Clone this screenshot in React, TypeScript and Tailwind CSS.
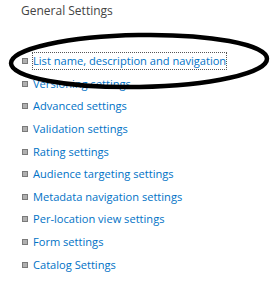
import React from 'react';

const items = [
  'List name, description and navigation',
  'Versioning settings',
  'Advanced settings',
  'Validation settings',
  'Rating settings',
  'Audience targeting settings',
  'Metadata navigation settings',
  'Per-location view settings',
  'Form settings',
  'Catalog Settings',
];

const App: React.FC = () => {
  return (
    <div className="relative w-[270px] h-[282px] bg-white overflow-hidden" style={{ fontFamily: '"Open Sans", "Noto Sans", sans-serif' }}>
      <h3 className="pl-[21px] pt-[2px] text-[12px] font-normal text-[#444444] leading-[18px]">General Settings</h3>
      <ul className="mt-[30px] pl-[22px]">
        {items.map((item, i) => (
          <li key={item} className="flex items-center h-[22.6px]">
            <span className="w-[6px] h-[6px] bg-[#b0b0b0] border border-[#7a7a7a] mr-[5px] shrink-0" />
            <a
              href="#"
              className={`text-[11.1px] leading-[16px] text-[#0072c6] whitespace-nowrap ${
                i === 0 ? 'outline outline-1 outline-dotted outline-[#555]' : ''
              }`}
            >
              {item}
            </a>
          </li>
        ))}
      </ul>
      {/* hand-drawn annotation */}
      <svg className="absolute left-0 top-0 pointer-events-none" width="270" height="282">
        <ellipse cx="139" cy="61" rx="128" ry="26" fill="none" stroke="#000" strokeWidth="4.5" transform="rotate(-1 139 61)" />
      </svg>
    </div>
  );
};

export default App;
